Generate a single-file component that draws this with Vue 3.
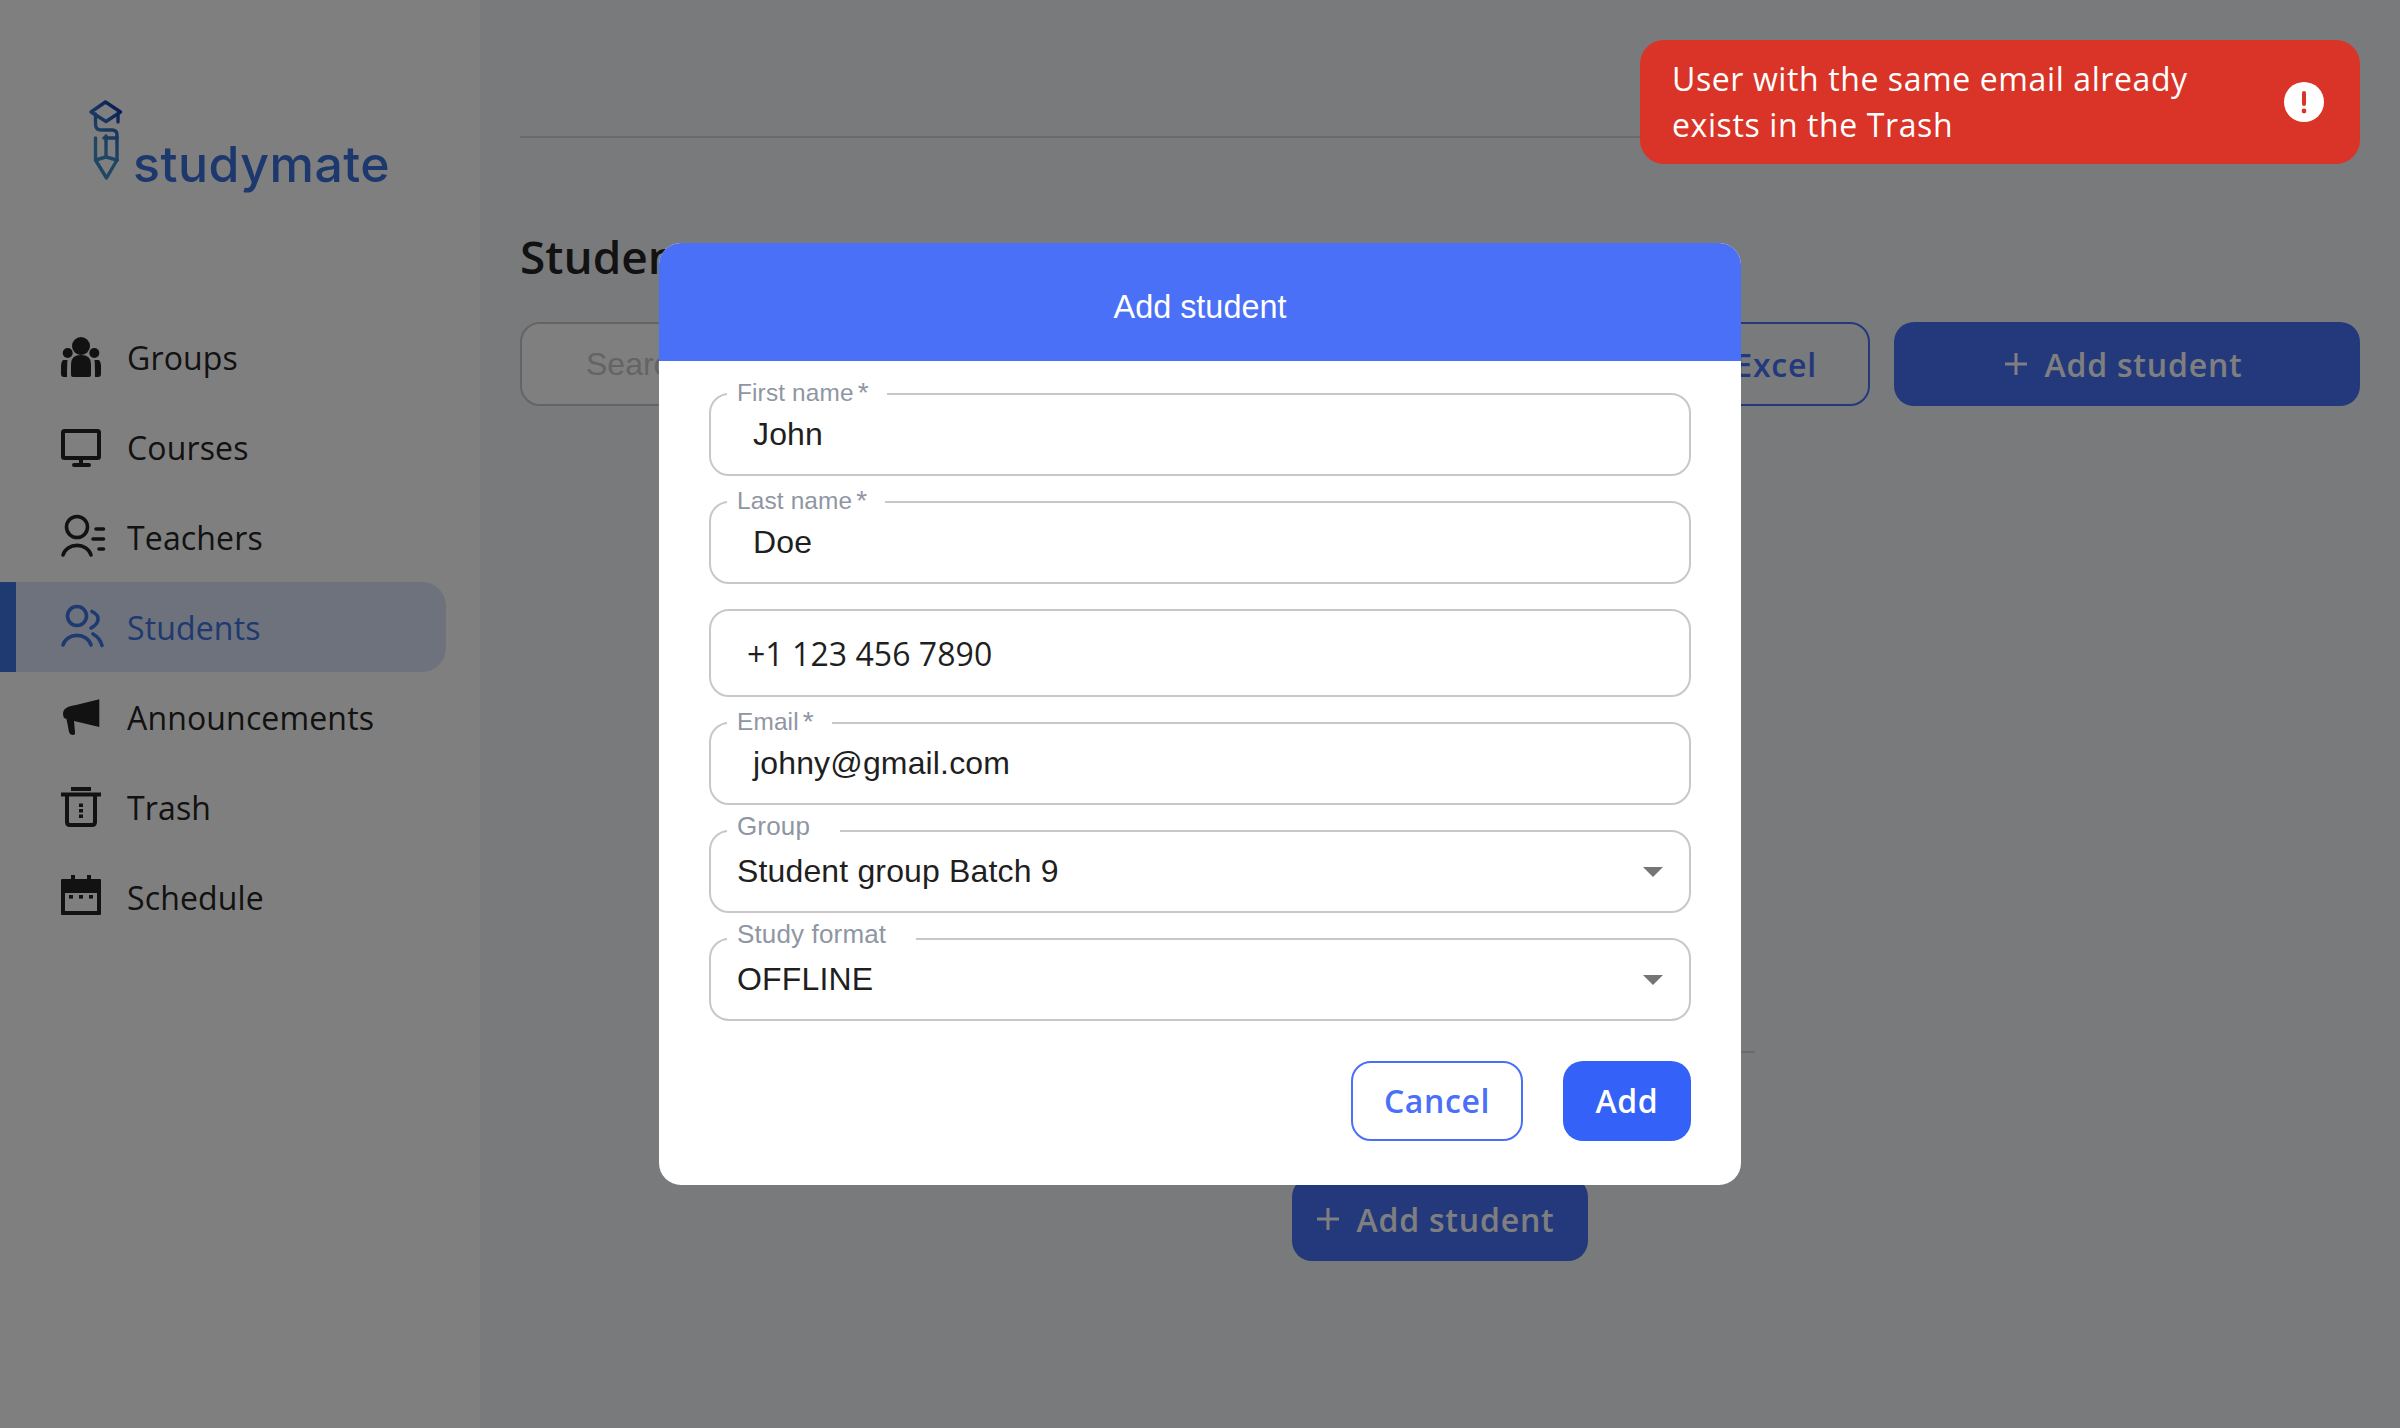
<script setup>
const fields = [
  { label: 'First name', required: true, value: 'John', type: 'input' },
  { label: 'Last name', required: true, value: 'Doe', type: 'input' },
  { value: '+1 123 456 7890', type: 'phone' },
  { label: 'Email', required: true, value: 'johny@gmail.com', type: 'input' },
  { label: 'Group', value: 'Student group Batch 9', type: 'select' },
  { label: 'Study format', value: 'OFFLINE', type: 'select' }
]
</script>

<template>
  <div class="page">
    <aside class="sidebar">
      <div class="logo">
        <svg class="logo-icon" width="36" height="84" viewBox="88 99 36 84" fill="none">
          <defs>
            <linearGradient id="logoGrad" gradientUnits="userSpaceOnUse" x1="90" y1="140" x2="122" y2="110">
              <stop offset="0" stop-color="#3f8fc9" />
              <stop offset="0.6" stop-color="#2f68c0" />
              <stop offset="1" stop-color="#1238a8" />
            </linearGradient>
          </defs>
          <g stroke="url(#logoGrad)" stroke-width="3.4" stroke-linejoin="round" stroke-linecap="round">
            <path d="M91 112 L105.5 102 L120.5 112 L106 121.5 Z" />
            <path d="M118 115 V122" />
            <path d="M95.5 114 V124 Q95.5 130 101 130 H112 Q117 130 117 135 V160" />
            <path d="M95.5 138 V160 L106.5 178 L117 160" />
            <path d="M95.5 160 L106 157 L117 160" />
            <path d="M106 136 V156" />
            <path d="M104 138 H117" />
          </g>
        </svg>
        <span class="logo-text">studymate</span>
      </div>

      <nav class="nav">
        <a class="nav-item">
          <svg class="nav-icon" width="44" height="44" viewBox="0 0 44 44" fill="currentColor">
            <circle cx="20" cy="11" r="9" />
            <circle cx="6.7" cy="18" r="5" />
            <circle cx="33.3" cy="18" r="5" />
            <path d="M10 40 V29 Q10 20 20 20 Q30 20 30 29 V40 Q30 42 28 42 H12 Q10 42 10 40 Z" />
            <path d="M2 25 L6.5 25 Q6 30 6 42 H3 Q0 42 0 39 V30 Q0 27 2 25 Z" />
            <path d="M38 25 L33.5 25 Q34 30 34 42 H37 Q40 42 40 39 V30 Q40 27 38 25 Z" />
          </svg>
          Groups
        </a>
        <a class="nav-item">
          <svg class="nav-icon" width="44" height="44" viewBox="0 0 44 44" fill="none" stroke="currentColor" stroke-width="4">
            <rect x="2" y="6" width="36" height="27" rx="1.5" />
            <path d="M20 34 V40" />
            <path d="M13 40 H28" stroke-linecap="round" />
          </svg>
          Courses
        </a>
        <a class="nav-item">
          <svg class="nav-icon" width="44" height="44" viewBox="0 0 44 44" fill="none" stroke="currentColor" stroke-width="3.6" stroke-linecap="round">
            <circle cx="16" cy="12" r="10.5" />
            <path d="M2 40 A14.5 13 0 0 1 30 40" />
            <path d="M35 14 H42.5 M32 24 H42.5 M38 34 H42.5" />
          </svg>
          Teachers
        </a>
        <a class="nav-item active">
          <svg class="nav-icon" width="44" height="44" viewBox="0 0 44 44" fill="none" stroke="currentColor" stroke-width="3.6" stroke-linecap="round">
            <circle cx="16" cy="11" r="9.5" />
            <path d="M2 40 A14.5 13 0 0 1 30 40" />
            <path d="M31 6.5 Q38 10 37 15 Q36 20 30 23" />
            <path d="M32 29 Q39 33 41 40.5" />
          </svg>
          Students
        </a>
        <a class="nav-item">
          <svg class="nav-icon" width="44" height="44" viewBox="0 0 44 44" fill="currentColor">
            <path d="M38.3 4.3 L15 10 Q6 11 3 15 Q1 18 3 23 L5.5 24 L8 37 Q9 40 12 40 Q14.5 40 14 37 L13 26 L38.3 32 Z" />
          </svg>
          Announcements
        </a>
        <a class="nav-item">
          <svg class="nav-icon" width="44" height="44" viewBox="0 0 44 44" fill="none" stroke="currentColor" stroke-width="4">
            <path d="M10 4 H30 M0 9.5 H40" />
            <path d="M6 10 V37 Q6 40 9 40 H31 Q34 40 34 37 V10" />
            <path d="M20 18.5 V22 M20 24 V27.5 M20 29.5 V33" />
          </svg>
          Trash
        </a>
        <a class="nav-item">
          <svg class="nav-icon" width="44" height="44" viewBox="0 0 44 44" fill="currentColor">
            <path fill-rule="evenodd" d="M10 0 H14 V4 H26 V0 H30 V4 H39 Q40 4 40 5 V39 Q40 40 39 40 H1 Q0 40 0 39 V5 Q0 4 1 4 H10 Z M4 18 V36 H36 V18 Z" />
            <rect x="8" y="20" width="4" height="3.6" />
            <rect x="18" y="20" width="4" height="3.6" />
            <rect x="28" y="20" width="4" height="3.6" />
          </svg>
          Schedule
        </a>
      </nav>
    </aside>

    <main class="main">
      <div class="topbar"></div>
      <h1 class="title">Students</h1>
      <div class="toolbar">
        <div class="search">Search</div>
        <button class="btn-outline">Import from Excel</button>
        <button class="btn-primary wide">
          <svg class="plus" width="24" height="24" viewBox="0 0 24 24"><path d="M12 1 V23 M1 12 H23" stroke="currentColor" stroke-width="3" /></svg>
          Add student
        </button>
      </div>
      <div class="empty">
        <div class="empty-line"></div>
        <button class="btn-primary small">
          <svg class="plus" width="24" height="24" viewBox="0 0 24 24"><path d="M12 1 V23 M1 12 H23" stroke="currentColor" stroke-width="3" /></svg>
          Add student
        </button>
      </div>
    </main>

    <div class="overlay">
      <div class="modal">
        <div class="modal-header">Add student</div>
        <div class="modal-body">
          <div
            v-for="field in fields"
            :key="field.value"
            class="field"
            :class="field.type"
          >
            <span v-if="field.label" class="field-label" :class="{ req: field.required }">
              {{ field.label }}<span v-if="field.required" class="star">*</span>
            </span>
            <span class="field-value">{{ field.value }}</span>
            <span v-if="field.type === 'select'" class="arrow"></span>
          </div>
          <div class="modal-actions">
            <button class="btn-cancel">Cancel</button>
            <button class="btn-add">Add</button>
          </div>
        </div>
      </div>
    </div>

    <div class="toast">
      <span class="toast-text">User with the same email already exists in the Trash</span>
      <svg class="toast-icon" width="40" height="40" viewBox="0 0 40 40">
        <circle cx="20" cy="20" r="20" fill="#fff" />
        <rect x="18" y="9" width="4" height="15" rx="2" fill="#d93427" />
        <circle cx="20" cy="29" r="2.4" fill="#d93427" />
      </svg>
    </div>
  </div>
</template>

<style>
body {
  margin: 0;
  overflow: hidden;
}
</style>

<style scoped>
.page {
  position: relative;
  display: flex;
  height: 1428px;
  overflow: hidden;
  font-family: "Open Sans", sans-serif;
  background: #f3f5f9;
}

/* Sidebar */
.sidebar {
  width: 480px;
  flex-shrink: 0;
  background: #fff;
}

.logo {
  display: flex;
  align-items: flex-start;
  height: 312px;
  padding: 99px 0 0 88px;
  box-sizing: border-box;
}

.logo-text {
  margin: 36px 0 0 9px;
  font-family: "Inter", sans-serif;
  font-size: 50px;
  font-weight: 500;
  line-height: 58px;
  letter-spacing: 0.5px;
  color: #3a70d8;
}

.nav-item {
  display: flex;
  align-items: center;
  width: 446px;
  height: 90px;
  box-sizing: border-box;
  padding-left: 45px;
  border-left: 16px solid transparent;
  border-radius: 0 24px 24px 0;
  font-size: 32px;
  font-weight: 450;
  letter-spacing: 0.15px;
  color: #242424;
}

.nav-item.active {
  background: #dae4f8;
  border-left-color: #3c74e0;
  color: #3c74e0;
}

.nav-icon {
  flex-shrink: 0;
  margin-right: 22px;
  overflow: visible;
}

/* Main area */
.main {
  flex: 1;
  padding: 0 40px;
  min-width: 0;
}

.topbar {
  height: 136px;
  border-bottom: 2px solid #d6d6da;
}

.title {
  margin: 0;
  padding-top: 87px;
  height: 97px;
  font-size: 46px;
  font-weight: 550;
  line-height: 62px;
  color: #242424;
}

.toolbar {
  display: flex;
  gap: 24px;
}

.search {
  flex: 1;
  height: 84px;
  box-sizing: border-box;
  padding-left: 64px;
  border: 2px solid #c8c8c8;
  border-radius: 20px;
  background: #fff;
  font-family: "Liberation Sans", Arial, sans-serif;
  font-size: 32px;
  line-height: 80px;
  color: #c8c8c8;
}

button {
  font-family: "Open Sans", sans-serif;
  font-size: 32px;
  letter-spacing: 0.8px;
  cursor: pointer;
}

.btn-outline {
  display: flex;
  align-items: center;
  justify-content: flex-end;
  width: 560px;
  height: 84px;
  padding: 0 51px 0 0;
  border: 2px solid #4673f8;
  border-radius: 20px;
  background: transparent;
  font-weight: 600;
  color: #4673f8;
}

.btn-primary {
  display: flex;
  align-items: center;
  justify-content: center;
  height: 84px;
  border: none;
  border-radius: 20px;
  background: #4673f8;
  font-weight: 600;
  color: #fff;
}

.btn-primary.wide {
  width: 466px;
  flex-shrink: 0;
  padding-right: 13px;
}

.btn-primary.small {
  width: 296px;
  padding-right: 15px;
}

.plus {
  margin-right: 16px;
}

.empty {
  display: flex;
  flex-direction: column;
  align-items: center;
  padding-top: 645px;
}

.empty-line {
  width: 630px;
  height: 2px;
  margin-bottom: 124px;
  background: #d6d6da;
}

/* Modal */
.overlay {
  position: absolute;
  inset: 0;
  display: flex;
  align-items: center;
  justify-content: center;
  background: rgba(0, 0, 0, 0.5);
}

.modal {
  width: 1082px;
  height: 942px;
  overflow: hidden;
  border-radius: 22px;
  background: #fff;
  font-family: "Liberation Sans", Arial, sans-serif;
}

.modal-header {
  height: 118px;
  background: #4970f6;
  font-size: 32.4px;
  line-height: 128px;
  text-align: center;
  color: #fff;
}

.modal-body {
  display: flex;
  flex-direction: column;
  gap: 25px;
  padding: 32px 50px 0;
}

.field {
  position: relative;
  display: flex;
  align-items: center;
  height: 83px;
  box-sizing: border-box;
  padding-left: 42px;
  border: 2px solid #c8c8c8;
  border-radius: 20px;
  font-size: 32px;
  letter-spacing: 0.15px;
  color: #1f1f1f;
}

.field.phone {
  height: 88px;
  padding-left: 36px;
  font-family: "Open Sans", sans-serif;
  letter-spacing: 0.05px;
}

.field.select {
  padding-left: 26px;
}

.field-label {
  position: absolute;
  top: -16px;
  left: 16px;
  display: flex;
  padding: 0 18px 0 10px;
  background: #fff;
  font-size: 24.4px;
  line-height: 28px;
  color: #8f96a3;
}

.field.select .field-label {
  top: -20px;
  padding-right: 30px;
  font-size: 26px;
}

.star {
  margin-left: 4px;
  font-size: 28px;
}

.arrow {
  position: absolute;
  top: 35px;
  right: 26px;
  border-left: 10px solid transparent;
  border-right: 10px solid transparent;
  border-top: 10px solid #757575;
}

.modal-actions {
  display: flex;
  justify-content: flex-end;
  gap: 40px;
  margin-top: 15px;
}

.btn-cancel,
.btn-add {
  height: 80px;
  padding-bottom: 2px;
  border-radius: 20px;
  font-weight: 600;
  letter-spacing: 0.6px;
}

.btn-cancel {
  width: 172px;
  border: 2px solid #4970f6;
  background: #fff;
  color: #4970f6;
}

.btn-add {
  width: 128px;
  border: none;
  background: #3461f7;
  color: #fff;
}

/* Toast */
.toast {
  position: absolute;
  top: 40px;
  right: 40px;
  display: flex;
  align-items: center;
  justify-content: space-between;
  width: 720px;
  height: 124px;
  box-sizing: border-box;
  padding: 0 36px 0 32px;
  border-radius: 24px;
  background: #d93427;
}

.toast-text {
  width: 540px;
  font-size: 32px;
  line-height: 46px;
  letter-spacing: 0.6px;
  color: #fff;
}
</style>
